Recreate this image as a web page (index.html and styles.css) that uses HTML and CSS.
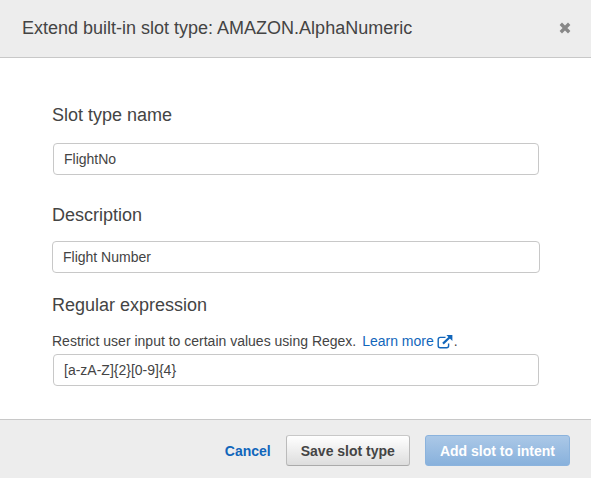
FILE: index.html
```html
<!DOCTYPE html>
<html lang="en">
<head>
<meta charset="utf-8">
<meta name="viewport" content="width=device-width, initial-scale=1">
<title>Extend built-in slot type</title>
<link rel="stylesheet" href="styles.css">
</head>
<body>
<form class="dialog" role="dialog" aria-labelledby="dialog-title">
  <header class="dialog-header">
    <h1 class="dialog-title" id="dialog-title">Extend built-in slot type: AMAZON.AlphaNumeric</h1>
    <button class="close" type="button" aria-label="Close">
      <svg class="close-icon" viewBox="0 0 12 12" aria-hidden="true"><path d="M1.8 1.8 10.2 10.2M10.2 1.8 1.8 10.2"/></svg>
    </button>
  </header>
  <main class="dialog-body">
    <div class="field field-name">
      <label class="label" for="slot-name">Slot type name</label>
      <div class="control inset"><input class="input" id="slot-name" type="text" value="FlightNo"></div>
    </div>
    <div class="field field-description">
      <label class="label" for="description">Description</label>
      <div class="control"><input class="input" id="description" type="text" value="Flight Number"></div>
    </div>
    <div class="field field-regex">
      <label class="label" for="regex">Regular expression</label>
      <p class="help" id="regex-help">Restrict user input to certain values using Regex. <a class="link" href="#">Learn more<svg class="external-icon" viewBox="0 0 16 14" aria-hidden="true"><path class="frame" d="M8.5 2.4H3.2Q1.2 2.4 1.2 4.4V10.8Q1.2 12.8 3.2 12.8H9.6Q11.6 12.8 11.6 10.8V8.4"/><path class="shaft" d="M6 8.6 13 2"/><path class="head" d="M9.4 0H15.4V6Z"/></svg></a>.</p>
      <div class="control inset"><input class="input" id="regex" type="text" value="[a-zA-Z]{2}[0-9]{4}" aria-describedby="regex-help"></div>
    </div>
  </main>
  <footer class="dialog-footer">
    <button class="button cancel" type="button">Cancel</button>
    <button class="button save" type="button">Save slot type</button>
    <button class="button add" type="button" disabled>Add slot to intent</button>
  </footer>
</form>
</body>
</html>
```
FILE: styles.css
```css
* {
  box-sizing: border-box;
}

body {
  margin: 0;
  background: #fff;
  color: #444;
  font-family: "Liberation Sans", Arial, sans-serif;
  font-size: 14px;
  line-height: 20px;
}

.dialog-header {
  display: flex;
  align-items: center;
  justify-content: space-between;
  padding: 16px 20px 17px 22px;
  background: #ededed;
  border-bottom: 1px solid #c8c8c8;
}

.dialog-title {
  margin: 0;
  font-size: 18px;
  font-weight: 400;
  line-height: 24px;
}

.close {
  display: flex;
  padding: 0;
  border: 0;
  background: none;
  cursor: pointer;
}

.close-icon {
  width: 12px;
  height: 12px;
  fill: none;
  stroke: #888;
  stroke-width: 3.4;
}

.dialog-body {
  display: flex;
  flex-direction: column;
  padding: 45px 51px 33px 52px;
}

.field {
  display: flex;
  flex-direction: column;
}

.field-name {
  gap: 16px;
  margin-bottom: 28px;
}

.field-description {
  gap: 14px;
  margin-bottom: 20px;
}

.label {
  font-size: 18px;
  line-height: 24px;
}

.control {
  display: flex;
}

.inset {
  padding: 0 1px;
}

.input {
  flex: 1;
  min-width: 0;
  height: 32px;
  padding: 0 10px;
  border: 1px solid #c8c8c8;
  border-radius: 4px;
  background: #fff;
  color: #444;
  font: inherit;
}

.help {
  margin: 14px 0 3px;
}

.link {
  margin-left: 2px;
  color: #1166bb;
  text-decoration: none;
}

.external-icon {
  width: 16px;
  height: 14px;
  margin: 0 1px 0 3px;
  vertical-align: -3px;
  fill: none;
  stroke: #1166bb;
}

.frame {
  stroke-width: 1.4;
}

.shaft {
  stroke-width: 2.2;
}

.head {
  fill: #1166bb;
  stroke: none;
}

.dialog-footer {
  display: flex;
  align-items: center;
  justify-content: flex-end;
  padding: 15px 21px 12px;
  background: #ededed;
  border-top: 1px solid #c8c8c8;
}

.button {
  height: 31px;
  padding: 0 14px;
  border: 1px solid transparent;
  border-radius: 3px;
  font: inherit;
  font-weight: 700;
  cursor: pointer;
}

.cancel {
  background: none;
  color: #1166bb;
}

.save {
  border-color: #c8c8c8 #bbb #aaa;
  background: linear-gradient(#fff, #ddd);
  color: #444;
}

.add {
  margin-left: 15px;
  border-color: #8bb3dd;
  background: linear-gradient(#abc8e7, #88b1dc);
  color: #fff;
  cursor: default;
}
```
